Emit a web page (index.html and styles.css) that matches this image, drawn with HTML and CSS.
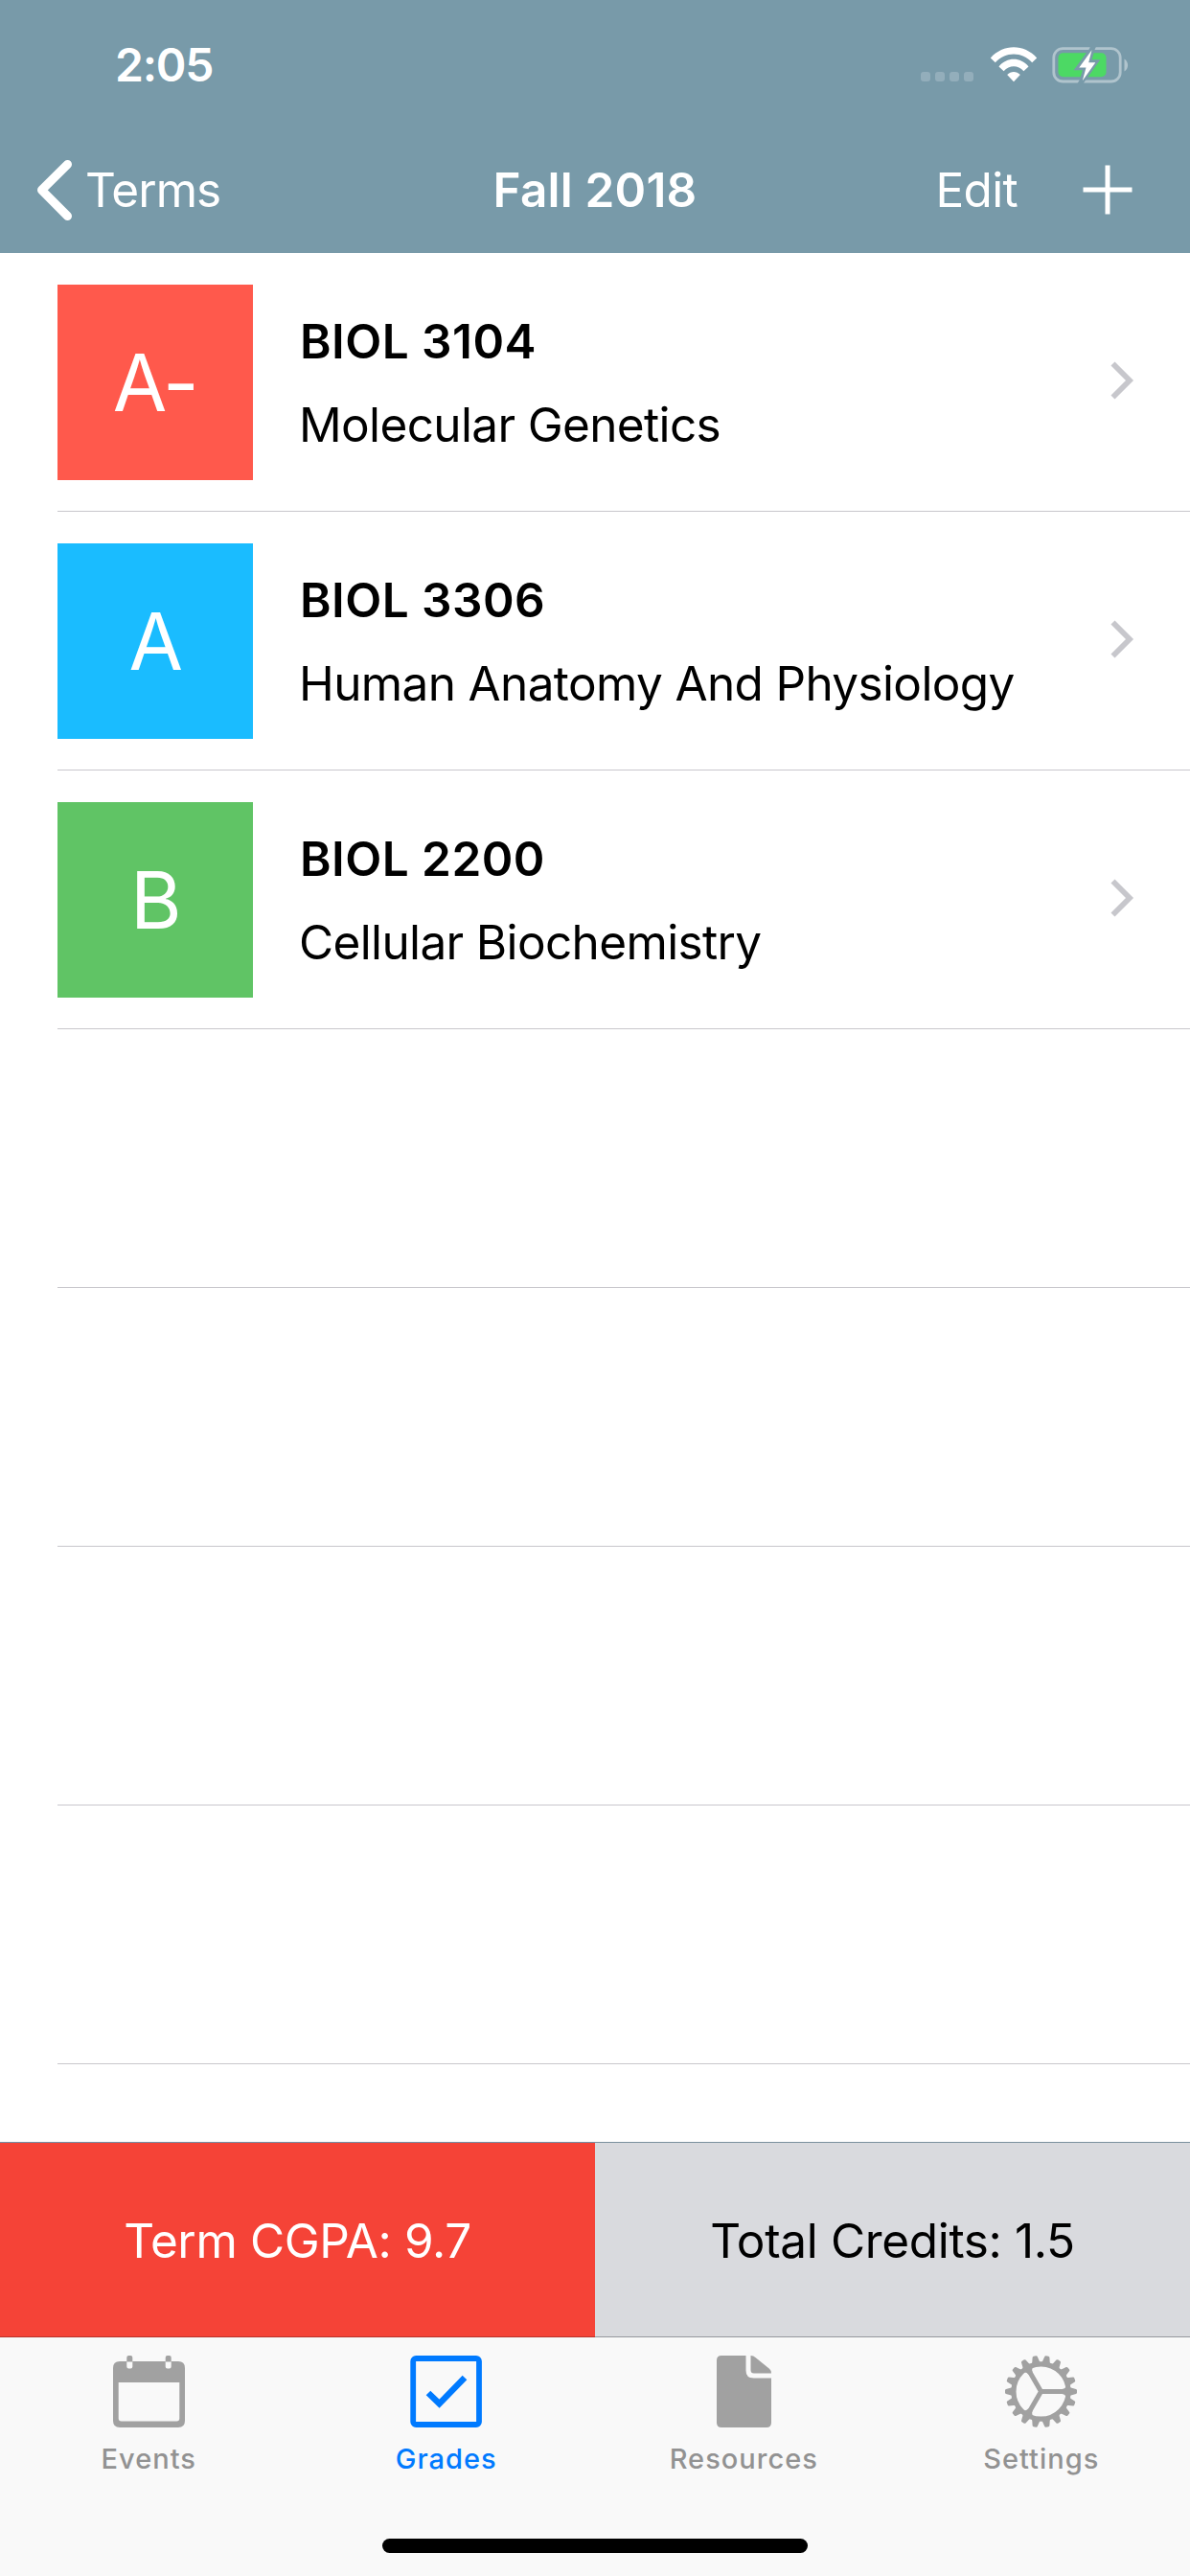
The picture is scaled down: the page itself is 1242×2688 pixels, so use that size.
FILE: index.html
```html
<!DOCTYPE html>
<html lang="en">
<head>
<meta charset="utf-8">
<title>Fall 2018</title>
<link rel="stylesheet" href="styles.css">
</head>
<body>
<div class="screen">
  <header class="header">
    <div class="status">
      <span class="time">2:05</span>
      <div class="indicators">
        <svg class="signal" width="55" height="10" viewBox="0 0 55 10"><rect width="10" height="10" rx="3"/><rect x="15" width="10" height="10" rx="3"/><rect x="30" width="10" height="10" rx="3"/><rect x="45" width="10" height="10" rx="3"/></svg>
        <svg class="wifi" width="50" height="37" viewBox="0 0 50 37">
          <path d="M0.8 11.5 C14 -3.5 36 -3.5 49.2 11.5 L44.2 16.3 C34 4.7 16 4.7 5.800 16.300 Z"/>
          <path d="M9.500 20.500 C18 10.300 32 10.300 40.500 20.500 L35.400 25.200 C29.500 18.700 20.500 18.700 14.600 25.200 Z"/>
          <path d="M18.200 29 C22 25 28 25 31.800 29 L25 36.200 Z"/>
        </svg>
        <svg class="battery" width="80" height="38" viewBox="0 0 80 38">
          <defs><mask id="bolt-gap" maskUnits="userSpaceOnUse" x="0" y="-2" width="80" height="42"><rect y="-2" width="80" height="42" fill="#fff"/><path d="M41.500 3 L28 21.500 H35.500 L31.500 35 M31.500 35 L45 16 H38 L41.500 3 Z M41.500 3 L45 -5 M31.500 35 L27 43" fill="#000" stroke="#000" stroke-width="5.500"/></mask></defs>
          <g mask="url(#bolt-gap)">
            <rect class="battery-shell" x="1.800" y="1.600" width="69.400" height="34.400" rx="9.500"/>
            <rect class="battery-level" x="6.500" y="6.300" width="50" height="25" rx="5"/>
          </g>
          <path class="battery-cap" d="M75.500 12.500 C80.300 15.500 80.300 22.500 75.500 25.500 Z"/>
          <path class="battery-bolt" d="M41.500 3.300 L28.300 21.500 H35.500 L31.800 35.200 L45.300 16.200 H38.200 Z"/>
        </svg>
      </div>
    </div>
    <nav class="nav">
      <div class="back">
        <svg width="40" height="66" viewBox="0 0 40 66"><path d="M34.500 6.500 L7.500 33.300 L34.500 60.500"/></svg>
        <span>Terms</span>
      </div>
      <h1 class="title">Fall 2018</h1>
      <div class="actions">
        <span class="edit">Edit</span>
        <svg class="plus" width="52" height="52" viewBox="0 0 52 52"><path d="M26 0.500 V51.500 M0.500 26 H51.500"/></svg>
      </div>
    </nav>
  </header>

  <main class="list">
    <div class="row">
      <div class="grade grade-red">A-</div>
      <div class="course"><strong class="code">BIOL 3104</strong><span class="name">Molecular Genetics</span></div>
      <svg class="disclosure" width="26" height="40" viewBox="0 0 26 40"><path d="M3.500 2.500 L21 20 L3.500 37.500"/></svg>
    </div>
    <div class="row">
      <div class="grade grade-blue">A</div>
      <div class="course"><strong class="code">BIOL 3306</strong><span class="name">Human Anatomy And Physiology</span></div>
      <svg class="disclosure" width="26" height="40" viewBox="0 0 26 40"><path d="M3.500 2.500 L21 20 L3.500 37.500"/></svg>
    </div>
    <div class="row">
      <div class="grade grade-green">B</div>
      <div class="course"><strong class="code">BIOL 2200</strong><span class="name">Cellular Biochemistry</span></div>
      <svg class="disclosure" width="26" height="40" viewBox="0 0 26 40"><path d="M3.500 2.500 L21 20 L3.500 37.500"/></svg>
    </div>
    <div class="row"></div>
    <div class="row"></div>
    <div class="row"></div>
    <div class="row"></div>
  </main>

  <section class="summary">
    <div class="gpa">Term CGPA: 9.7</div>
    <div class="credits">Total Credits: 1.5</div>
  </section>

  <footer class="tabbar">
    <div class="tabs">
      <div class="tab">
        <svg width="75" height="75" viewBox="0 0 75 75">
          <path fill="#a1a1a1" fill-rule="evenodd" d="M7 6 H68 Q75 6 75 13 V68 Q75 75 68 75 H7 Q0 75 0 68 V13 Q0 6 7 6 Z M5.700 28 V65.500 Q5.700 68.500 8.700 68.500 H66.300 Q69.300 68.500 69.300 65.500 V28 Z"/>
          <path fill="#f9f9f9" d="M14.300 6 H20.300 V11.500 Q20.300 13.500 18.300 13.500 H16.300 Q14.300 13.500 14.300 11.500 Z M54.700 6 H60.700 V11.500 Q60.700 13.500 58.700 13.500 H56.700 Q54.700 13.500 54.700 11.500 Z"/>
          <path fill="#a1a1a1" d="M14.300 6.500 V2 Q14.300 0 16.300 0 H18.300 Q20.300 0 20.300 2 V6.500 Z M54.700 6.500 V2 Q54.700 0 56.700 0 H58.700 Q60.700 0 60.700 2 V6.500 Z"/>
        </svg>
        <span>Events</span>
      </div>
      <div class="tab tab-active">
        <svg width="75" height="75" viewBox="0 0 75 75" fill="none" stroke="#007aff"><rect x="3.200" y="3" width="68.800" height="69" rx="3" stroke-width="5.800"/><path d="M19 39 L30.500 50.200 L57 23" stroke-width="6.500"/></svg>
        <span>Grades</span>
      </div>
      <div class="tab">
        <svg width="57" height="75" viewBox="0 0 57 75" fill="#a1a1a1"><path d="M5 0 H30.500 V15.500 Q30.500 23.500 38.500 23.500 H57 V70 Q57 75 52 75 H5 Q0 75 0 70 V5 Q0 0 5 0 Z"/><path d="M35.500 0 Q38.500 0 40.500 2 L55 13.800 Q57 15.500 57 18.500 H39 Q35.500 18.500 35.500 15 Z"/></svg>
        <span>Resources</span>
      </div>
      <div class="tab">
        <svg width="75" height="75" viewBox="-37.500 -37.500 75 75">
          <defs><path id="tooth" d="M28 -5.200 L32 -3.700 L36.500 -2.600 Q37.500 -2.300 37.500 -1.300 V1.300 Q37.500 2.300 36.500 2.600 L32 3.700 L28 5.200 Z"/></defs>
          <circle r="28.600" fill="none" stroke="#a1a1a1" stroke-width="5.200"/>
          <path d="M0 0 H28 M0 0 L-14 -24.200 M0 0 L-14 24.200" stroke="#a1a1a1" stroke-width="5"/>
          <path fill="#a1a1a1" d="M22 -2.500 Q26 -3 26.500 -7 H28 V7 H26.500 Q26 3 22 2.500 Z"/>
          <path fill="#a1a1a1" transform="rotate(120)" d="M22 -2.500 Q26 -3 26.500 -7 H28 V7 H26.500 Q26 3 22 2.500 Z"/>
          <path fill="#a1a1a1" transform="rotate(240)" d="M22 -2.500 Q26 -3 26.500 -7 H28 V7 H26.500 Q26 3 22 2.500 Z"/>
          <g fill="#a1a1a1">
            <use href="#tooth"/><use href="#tooth" transform="rotate(20)"/><use href="#tooth" transform="rotate(40)"/><use href="#tooth" transform="rotate(60)"/><use href="#tooth" transform="rotate(80)"/><use href="#tooth" transform="rotate(100)"/><use href="#tooth" transform="rotate(120)"/><use href="#tooth" transform="rotate(140)"/><use href="#tooth" transform="rotate(160)"/><use href="#tooth" transform="rotate(180)"/><use href="#tooth" transform="rotate(200)"/><use href="#tooth" transform="rotate(220)"/><use href="#tooth" transform="rotate(240)"/><use href="#tooth" transform="rotate(260)"/><use href="#tooth" transform="rotate(280)"/><use href="#tooth" transform="rotate(300)"/><use href="#tooth" transform="rotate(320)"/><use href="#tooth" transform="rotate(340)"/>
          </g>
        </svg>
        <span>Settings</span>
      </div>
    </div>
    <div class="home"></div>
  </footer>
</div>
</body>
</html>
```
FILE: styles.css
```css
* { box-sizing: border-box; }
body {
  margin: 0;
  background: #fff;
  color: #000;
  font-family: Inter, "Liberation Sans", sans-serif;
  font-size: 49.5px;
}
svg { display: block; flex: none; }
.screen {
  display: flex;
  flex-direction: column;
  width: 1242px;
  height: 2688px;
  overflow: hidden;
}

/* Status and navigation bars */
.header { height: 264px; background: #789aa9; color: #fff; }
.status {
  display: flex;
  justify-content: space-between;
  height: 132px;
  padding: 4px 64px 0 120px;
}
.time {
  font-size: 48px;
  font-weight: 600;
  line-height: 128px;
  letter-spacing: -1.2px;
}
.indicators { display: flex; align-items: flex-start; padding-top: 45px; }
.signal { margin: 26px 17px 0 0; fill: #93aebb; }
.wifi { margin-right: 15px; fill: #fff; }
.battery-shell { fill: none; stroke: #b0c4cd; stroke-width: 2.800px; }
.battery-level { fill: #4cd964; }
.battery-cap { fill: #b0c4cd; }
.battery-bolt { fill: #fff; }
.nav {
  display: grid;
  grid-template-columns: 1fr auto 1fr;
  align-items: center;
  height: 132px;
  line-height: 66px;
  padding: 0 60px 0 36px;
}
.back { display: flex; align-items: center; gap: 13px; letter-spacing: -0.900px; }
.back path { fill: none; stroke: #fff; stroke-width: 9px; stroke-linecap: round; stroke-linejoin: round; }
.title {
  margin: 0 0 0 24px;
  font-size: inherit;
  font-weight: 600;
  letter-spacing: 0.200px;
}
.actions { display: flex; justify-content: flex-end; align-items: center; gap: 68px; }
.edit { letter-spacing: -0.700px; }
.plus { margin-top: -1px; stroke: #fff; stroke-width: 5px; fill: none; }

/* Course list */
.list { height: 1971px; padding-left: 60px; }
.row {
  display: flex;
  align-items: flex-start;
  height: 270px;
  padding: 33px 58px 0 0;
  border-bottom: 1px solid #c8c7cc;
}
.grade {
  width: 204px;
  height: 204px;
  padding-top: 1px;
  color: #fff;
  font-size: 82px;
  line-height: 204px;
  text-align: center;
  letter-spacing: -1.600px;
}
.grade-red { background: #ff594c; }
.grade-blue { background: #1abcff; }
.grade-green { background: #60c465; }
.course {
  display: flex;
  flex: 1;
  flex-direction: column;
  padding: 16px 0 0 48px;
  line-height: 87px;
}
.code { font-weight: 600; letter-spacing: 0.450px; padding-left: 1px; }
.name { letter-spacing: -0.640px; }
.disclosure { margin-top: 80px; }
.disclosure path { fill: none; stroke: #c7c7cc; stroke-width: 5.700px; }

/* Totals */
.summary {
  display: grid;
  grid-template-columns: 1fr 1fr;
  height: 204px;
  line-height: 204px;
  text-align: center;
}
.gpa {
  border-top: 1px solid #7290a6;
  border-bottom: 1px solid #b8332b;
  background: #f54337;
  color: #fff;
  letter-spacing: -0.390px;
}
.credits {
  border-top: 1px solid #7a909d;
  border-bottom: 1px solid #95979d;
  background: #d9dade;
  letter-spacing: -0.340px;
}
.gpa, .credits { height: 204px; }

/* Tab bar */
.tabbar {
  display: flex;
  flex-direction: column;
  align-items: center;
  justify-content: space-between;
  height: 249px;
  padding: 19px 0 24px;
  background: #f9f9f9;
}
.tabs { display: grid; grid-template-columns: repeat(4, 1fr); width: 100%; }
.tab {
  display: flex;
  flex-direction: column;
  align-items: center;
  gap: 15px;
  color: #929292;
  font-size: 29px;
  font-weight: 500;
  line-height: 36px;
  letter-spacing: 1px;
}
.tab-active { color: #007aff; }
.home { width: 444px; height: 15px; border-radius: 8px; background: #000; }
```
